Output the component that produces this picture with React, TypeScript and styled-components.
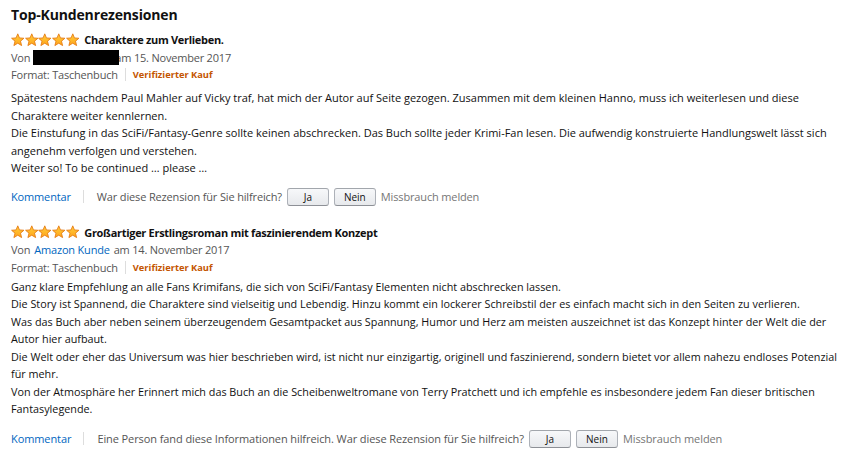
import React from "react";
import styled, { createGlobalStyle } from "styled-components";

const Global = createGlobalStyle`
  html, body { margin: 0; padding: 0; background: #ffffff; }
  body {
    font-family: "Open Sans", "Noto Sans", "Liberation Sans", sans-serif;
    color: #111111;
    -webkit-font-smoothing: antialiased;
  }
`;

const Page = styled.div`
  width: 850px;
  box-sizing: border-box;
  padding: 5px 0 0 11px;
`;

const Heading = styled.h2`
  margin: 0 0 6px 0;
  font-size: 14px;
  font-weight: 700;
  line-height: 20px;
  letter-spacing: -0.15px;
  color: #111111;
`;

const Review = styled.section<{ $gap: number }>`
  display: flex;
  flex-direction: column;
  margin-bottom: ${(p) => p.$gap}px;
`;

const TitleRow = styled.div`
  display: flex;
  align-items: center;
  gap: 5px;
  height: 17px;
`;

const Stars = styled.div`
  display: flex;
  gap: 0.2px;
`;

const ReviewTitle = styled.span`
  font-size: 11px;
  font-weight: 700;
  letter-spacing: -0.3px;
  color: #111111;
`;

const MetaRow = styled.div<{ $h: number }>`
  display: flex;
  align-items: center;
  height: ${(p) => p.$h}px;
  font-size: 11px;
  letter-spacing: -0.2px;
  color: #555555;
  white-space: nowrap;
`;

const Link = styled.a<{ $space?: boolean }>`
  color: #0066c0;
  text-decoration: none;
  cursor: pointer;
  margin: ${(p) => (p.$space ? "0 4px" : "0")};
`;

const Redacted = styled.span`
  display: inline-block;
  position: relative;
  z-index: 1;
  width: 86px;
  height: 15px;
  background: #000000;
  margin: 0 -4px 0 3px;
`;

const Sep = styled.span<{ $l: number; $r: number }>`
  display: inline-block;
  width: 1px;
  height: 13px;
  background: #dddddd;
  margin: 0 ${(p) => p.$r}px 0 ${(p) => p.$l}px;
`;

const Verified = styled.span`
  font-size: 9.3px;
  font-weight: 700;
  letter-spacing: 0;
  color: #c45500;
`;

const Body = styled.div<{ $top: number; $size: number }>`
  margin-top: ${(p) => p.$top}px;
  font-size: ${(p) => p.$size}px;
  line-height: 17.5px;
  color: #111111;
  white-space: nowrap;
`;

const Actions = styled.div<{ $top: number; $ls: number }>`
  display: flex;
  align-items: center;
  margin-top: ${(p) => p.$top}px;
  height: 20px;
  font-size: 11px;
  letter-spacing: ${(p) => p.$ls}px;
  color: #555555;
  white-space: nowrap;
`;

const Button = styled.button`
  width: 42px;
  height: 18px;
  margin-left: 5px;
  padding: 0;
  border: 1px solid #adb1b8;
  border-top-color: #a2a6ac;
  border-bottom-color: #8d9096;
  border-radius: 3px;
  background: linear-gradient(to bottom, #f7f8fa, #e7e9ec);
  font-family: inherit;
  font-size: 10px;
  color: #111111;
  cursor: pointer;
`;

const Abuse = styled.span`
  margin-left: 5px;
  color: #767676;
`;

const Star = () => (
  <svg width="13.5" height="14" viewBox="0 0 14 14">
    <defs>
      <linearGradient id="sg" x1="0" y1="0" x2="0" y2="1">
        <stop offset="0" stopColor="#ffce3a" />
        <stop offset="1" stopColor="#ffa41c" />
      </linearGradient>
    </defs>
    <path
      d="M7 0.6 L8.76 4.87 L13.4 5.2 L9.85 8.23 L11 12.8 L7 10.3 L3 12.8 L4.15 8.23 L0.6 5.2 L5.24 4.87 Z"
      fill="url(#sg)"
      stroke="#e47911"
      strokeWidth="0.9"
      strokeLinejoin="round"
    />
  </svg>
);

const FiveStars = () => (
  <Stars>
    {[0, 1, 2, 3, 4].map((i) => (
      <Star key={i} />
    ))}
  </Stars>
);

type ReviewData = {
  title: string;
  author: React.ReactNode;
  date: string;
  lines: string[];
  helpful?: string;
  bodyTop: number;
  bodySize: number;
  actionsTop: number;
  actionsLs: number;
  gap: number;
};

const reviews: ReviewData[] = [
  {
    title: "Charaktere zum Verlieben.",
    author: <Redacted />,
    date: "am 15. November 2017",
    lines: [
      "Spätestens nachdem Paul Mahler auf Vicky traf, hat mich der Autor auf Seite gezogen. Zusammen mit dem kleinen Hanno, muss ich weiterlesen und diese",
      "Charaktere weiter kennlernen.",
      "Die Einstufung in das SciFi/Fantasy-Genre sollte keinen abschrecken. Das Buch sollte jeder Krimi-Fan lesen. Die aufwendig konstruierte Handlungswelt lässt sich",
      "angenehm verfolgen und verstehen.",
      "Weiter so! To be continued … please …",
    ],
    bodyTop: 6,
    bodySize: 11,
    actionsTop: 10,
    actionsLs: -0.15,
    gap: 17,
  },
  {
    title: "Großartiger Erstlingsroman mit faszinierendem Konzept",
    author: <Link $space>Amazon Kunde</Link>,
    date: "am 14. November 2017",
    lines: [
      "Ganz klare Empfehlung an alle Fans Krimifans, die sich von SciFi/Fantasy Elementen nicht abschrecken lassen.",
      "Die Story ist Spannend, die Charaktere sind vielseitig und Lebendig. Hinzu kommt ein lockerer Schreibstil der es einfach macht sich in den Seiten zu verlieren.",
      "Was das Buch aber neben seinem überzeugendem Gesamtpacket aus Spannung, Humor und Herz am meisten auszeichnet ist das Konzept hinter der Welt die der",
      "Autor hier aufbaut.",
      "Die Welt oder eher das Universum was hier beschrieben wird, ist nicht nur einzigartig, originell und faszinierend, sondern bietet vor allem nahezu endloses Potenzial",
      "für mehr.",
      "Von der Atmosphäre her Erinnert mich das Buch an die Scheibenweltromane von Terry Pratchett und ich empfehle es insbesondere jedem Fan dieser britischen",
      "Fantasylegende.",
    ],
    helpful: "Eine Person fand diese Informationen hilfreich. ",
    bodyTop: 2,
    bodySize: 10.8,
    actionsTop: 11,
    actionsLs: -0.09,
    gap: 0,
  },
];

export default function App() {
  return (
    <Page>
      <Global />
      <Heading>Top-Kundenrezensionen</Heading>
      {reviews.map((r, idx) => (
        <Review key={idx} $gap={r.gap}>
          <TitleRow>
            <FiveStars />
            <ReviewTitle>{r.title}</ReviewTitle>
          </TitleRow>
          <MetaRow $h={18}>
            Von{r.author}
            {r.date}
          </MetaRow>
          <MetaRow $h={17}>
            Format: Taschenbuch
            <Sep $l={7} $r={7} />
            <Verified>Verifizierter Kauf</Verified>
          </MetaRow>
          <Body $top={r.bodyTop} $size={r.bodySize}>
            {r.lines.map((l, i) => (
              <div key={i}>{l}</div>
            ))}
          </Body>
          <Actions $top={r.actionsTop} $ls={r.actionsLs}>
            <Link>Kommentar</Link>
            <Sep $l={12} $r={13} />
            {r.helpful}War diese Rezension für Sie hilfreich?
            <Button>Ja</Button>
            <Button>Nein</Button>
            <Abuse>Missbrauch melden</Abuse>
          </Actions>
        </Review>
      ))}
    </Page>
  );
}
